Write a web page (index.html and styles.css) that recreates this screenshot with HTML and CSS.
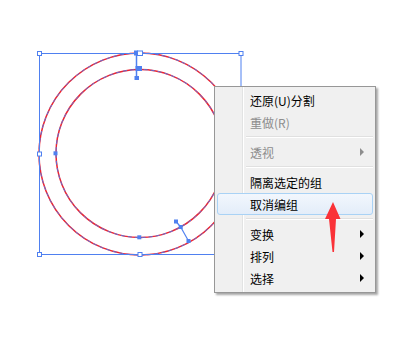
FILE: index.html
```
<!DOCTYPE html>
<html>
<head>
<meta charset="utf-8">
<link rel="stylesheet" href="styles.css">
</head>
<body>
<div class="stage">
  <svg class="art" width="407" height="354" viewBox="0 0 407 354" xmlns="http://www.w3.org/2000/svg">
    <g fill="none">
      <circle cx="140" cy="154" r="101" stroke="#ee2430" stroke-width="1.5"/>
      <circle cx="140" cy="154" r="101" stroke="#4a7cf2" stroke-width="0.9" stroke-dasharray="4 3"/>
      <circle cx="140" cy="153.5" r="84" stroke="#ee2430" stroke-width="1.5"/>
      <circle cx="140" cy="153.5" r="84" stroke="#4a7cf2" stroke-width="0.9" stroke-dasharray="4 3"/>
      <rect x="39.5" y="53.5" width="201.5" height="201" stroke="#4f80f0" stroke-width="1"/>
      <line x1="136.5" y1="53" x2="136.5" y2="78" stroke="#4f80f0" stroke-width="1.5"/>
      <line x1="176" y1="221.5" x2="180.7" y2="227" stroke="#4f80f0" stroke-width="1.2"/>
      <line x1="180.7" y1="227" x2="188.5" y2="241" stroke="#4f80f0" stroke-width="1.2"/>
    </g>
    <g fill="#4f80f0">
      <rect x="134" y="50.5" width="4" height="5"/>
      <rect x="135.5" y="66" width="6.5" height="5"/>
      <rect x="134.5" y="76" width="4.5" height="4"/>
      <rect x="53.5" y="151.3" width="4" height="4"/>
      <rect x="137.3" y="235.3" width="4" height="4"/>
      <rect x="174" y="219.5" width="4" height="4"/>
      <rect x="178.7" y="225" width="4" height="4"/>
      <rect x="186.5" y="239" width="4" height="4"/>
    </g>
    <g fill="#ffffff" stroke="#4f80f0" stroke-width="1">
      <rect x="37.5" y="51.5" width="4" height="4"/>
      <rect x="137.5" y="51" width="5" height="4.5"/>
      <rect x="239" y="51.5" width="4" height="4"/>
      <rect x="37.5" y="152" width="4" height="4"/>
      <rect x="37.5" y="252.5" width="4" height="4"/>
      <rect x="138" y="252.5" width="4" height="4"/>
    </g>
  </svg>

  <div class="menu">
    <div class="item">还原(U)分割</div>
    <div class="item disabled">重做(R)</div>
    <div class="sep"></div>
    <div class="item disabled sub">透视<span class="tri"></span></div>
    <div class="sep"></div>
    <div class="item">隔离选定的组</div>
    <div class="item hot">取消编组</div>
    <div class="sep"></div>
    <div class="item sub">变换<span class="tri"></span></div>
    <div class="item sub">排列<span class="tri"></span></div>
    <div class="item sub">选择<span class="tri"></span></div>
  </div>

  <svg class="pointer" width="20" height="54" viewBox="0 0 20 54" xmlns="http://www.w3.org/2000/svg">
    <polygon points="10,0 17.5,17 13,17 11,50 9.5,50 6,17 2,17" fill="#fa3238"/>
  </svg>
</div>
</body>
</html>
```

FILE: styles.css
```
html, body {
  margin: 0;
  padding: 0;
  background: #ffffff;
}

.stage {
  position: relative;
  width: 407px;
  height: 354px;
  overflow: hidden;
  background: #ffffff;
}

.art {
  position: absolute;
  left: 0;
  top: 0;
}

.menu {
  position: absolute;
  left: 214px;
  top: 86px;
  width: 156px;
  padding: 2px 2px 3px 2px;
  background: #f0f0f0;
  border: 1px solid #979797;
  box-shadow: 2px 2px 2px rgba(0, 0, 0, 0.35);
  font-family: "Noto Sans CJK SC", "Liberation Sans", sans-serif;
  font-size: 12px;
  color: #000000;
  background-image: linear-gradient(to right, transparent 27px, #e2e3e3 27px, #e2e3e3 28px, #ffffff 28px, #ffffff 29px, transparent 29px);
}

.item {
  position: relative;
  height: 22px;
  line-height: 22px;
  padding-left: 32px;
  box-sizing: border-box;
  border: 1px solid transparent;
  border-radius: 3px;
}

.item.disabled {
  color: #8d8d8d;
}

.item.hot {
  border-color: #a9d2f5;
  background: linear-gradient(to bottom, #f2f7fd, #e3edf9);
}

.sep {
  height: 8px;
  margin-left: 29px;
  background: linear-gradient(to bottom, transparent 3px, #e0e0e0 3px, #e0e0e0 4px, #ffffff 4px, #ffffff 5px, transparent 5px);
}

.tri {
  position: absolute;
  right: 8px;
  top: 6px;
  width: 0;
  height: 0;
  border-top: 4px solid transparent;
  border-bottom: 4px solid transparent;
  border-left: 4.5px solid #000000;
}

.item.disabled .tri {
  border-left-color: #8d8d8d;
}

.pointer {
  position: absolute;
  left: 323px;
  top: 202px;
}
```
